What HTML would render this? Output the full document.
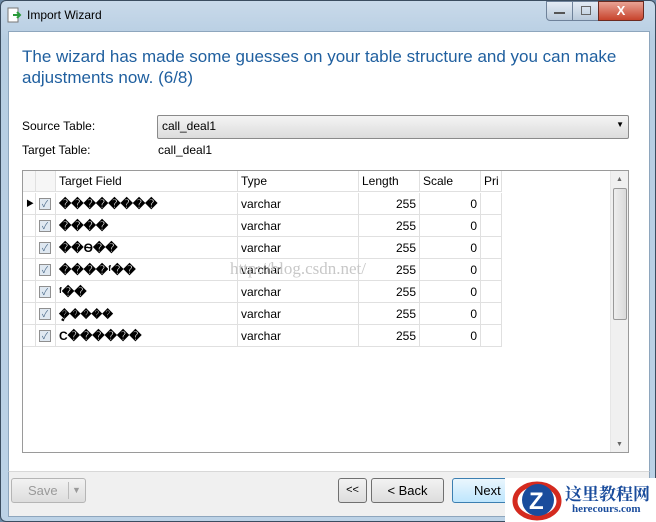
<!DOCTYPE html>
<html><head><style>
body{margin:0;width:656px;height:522px;overflow:hidden;background:#6d8aa6;font-family:"Liberation Sans","Noto Sans CJK SC",sans-serif;font-size:12px;}
.win{position:absolute;left:0;top:0;width:654px;height:520px;background:linear-gradient(#c9daea,#b6cde2 40px,#bcd2e6);border:1px solid #3b4d60;border-radius:6px;}
.title{position:absolute;left:26px;top:7px;font-size:12px;color:#000;}
.content{position:absolute;left:8px;top:31px;width:640px;height:439px;background:#fff;border:1px solid #8ea6bd;}
.foot{position:absolute;left:8px;top:471px;width:640px;height:44px;background:#f0f0f0;border:1px solid #8ea6bd;border-top:1px solid #d8d8d8;}
.h{position:absolute;left:22px;top:46px;font-size:17px;color:#1f5f9f;line-height:21px;width:620px;}
.lbl{position:absolute;font-size:12px;color:#000;}
.combo{position:absolute;left:157px;top:115px;width:470px;height:22px;border:1px solid #8a8a8a;border-radius:2px;background:linear-gradient(#f4f4f4,#dcdcdc);}
.grid{position:absolute;left:22px;top:170px;width:605px;height:281px;border:1px solid #9a9a9a;background:#fff;}
.c{position:absolute;height:21px;line-height:21px;border-right:1px solid #e0e0e0;border-bottom:1px solid #e0e0e0;box-sizing:border-box;padding:0 3px;}
.btn{position:absolute;top:478px;height:23px;border:1px solid #707070;border-radius:3px;background:linear-gradient(#f2f2f2,#dddddd);text-align:center;line-height:23px;font-size:13px;}
.cb{display:inline-block;width:10px;height:10px;border:1px solid #8f8f8f;background:#dfe8f1;margin-top:5px;font-size:9px;line-height:10px;text-align:center;color:#4a6a8a;}
</style></head><body>
<div class="win">
<svg style="position:absolute;left:6px;top:6px" width="16" height="16"><rect x="1" y="1" width="10" height="14" fill="#fff" stroke="#777"/><path d="M6 8h7M10 5l3 3-3 3" stroke="#2a9a3a" stroke-width="2" fill="none"/></svg>
<div class="title">Import Wizard</div>
<div style="position:absolute;left:545px;top:0;width:25px;height:18px;border:1px solid #6f829a;border-radius:0 0 0 4px;background:linear-gradient(#e4ecf5,#b9c9da)"><div style="margin:10px 7px;height:2px;background:#555"></div></div>
<div style="position:absolute;left:571px;top:0;width:25px;height:18px;border:1px solid #6f829a;background:linear-gradient(#e4ecf5,#b9c9da)"><div style="margin:4px 8px;width:8px;height:7px;border:1px solid #666"></div></div>
<div style="position:absolute;left:597px;top:0;width:44px;height:18px;border:1px solid #6b2a20;border-radius:0 0 4px 0;background:linear-gradient(#e9a395,#c7432c);color:#fff;font-weight:bold;text-align:center;line-height:17px;font-size:13px">X</div>
</div>
<div class="content"></div>
<div class="foot"></div>
<div class="h">The wizard has made some guesses on your table structure and you can make adjustments now. (6/8)</div>
<div class="lbl" style="left:22px;top:119px">Source Table:</div>
<div class="combo"><span style="position:absolute;left:4px;top:3px">call_deal1</span><span style="position:absolute;right:4px;top:4px;font-size:8px">▼</span></div>
<div class="lbl" style="left:22px;top:143px">Target Table:</div>
<div class="lbl" style="left:158px;top:143px">call_deal1</div>
<div class="grid">
<div class="c" style="left:0;top:0;width:13px;background:#f6f6f6"></div>
<div class="c" style="left:13px;top:0;width:20px;background:#f6f6f6"></div>
<div class="c" style="left:33px;top:0;width:182px">Target Field</div>
<div class="c" style="left:215px;top:0;width:121px">Type</div>
<div class="c" style="left:336px;top:0;width:61px">Length</div>
<div class="c" style="left:397px;top:0;width:61px">Scale</div>
<div class="c" style="left:458px;top:0;width:21px;overflow:hidden">Pri</div>
<div id="rows"></div>
<div style="position:absolute;right:0;top:0;width:17px;height:281px;background:#f0f0f0;border-left:1px solid #e6e6e6"><div style="text-align:center;font-size:7px;color:#666;margin-top:5px">▲</div><div style="position:absolute;left:2px;top:17px;width:12px;height:130px;border:1px solid #999;border-radius:2px;background:linear-gradient(90deg,#eee,#dadada)"></div><div style="position:absolute;bottom:4px;width:17px;text-align:center;font-size:7px;color:#666">▼</div></div>
</div>
<script>
var names=["��������","����","��Ѳ��","����ᶠ��","ᶠ��","�ܷ����","C������"];
var h="";
for(var i=0;i<7;i++){var t=22+i*22;
h+='<div class="c" style="left:0;top:'+t+'px;width:13px;height:22px;font-size:8px;line-height:22px">'+(i==0?'▶':'')+'</div>';
h+='<div class="c" style="left:13px;top:'+t+'px;width:20px;height:22px"><span class="cb">✓</span></div>';
h+='<div class="c" style="left:33px;top:'+t+'px;width:182px;height:22px;line-height:22px;font-weight:bold">'+names[i]+'</div>';
h+='<div class="c" style="left:215px;top:'+t+'px;width:121px;height:22px;line-height:22px">varchar</div>';
h+='<div class="c" style="left:336px;top:'+t+'px;width:61px;height:22px;line-height:22px;text-align:right">255</div>';
h+='<div class="c" style="left:397px;top:'+t+'px;width:61px;height:22px;line-height:22px;text-align:right">0</div>';
h+='<div class="c" style="left:458px;top:'+t+'px;width:21px;height:22px"></div>';}
document.getElementById("rows").innerHTML=h;
</script>
<div style="position:absolute;left:230px;top:259px;font-family:'Liberation Serif',serif;font-size:17px;color:#c8c8c8">http://blog.csdn.net/</div>
<div class="btn" style="left:11px;width:73px;color:#999;border-color:#b5b5b5;text-align:left"><span style="padding-left:16px">Save</span><span style="position:absolute;left:56px;top:3px;height:17px;border-left:1px solid #bbb"></span><span style="position:absolute;left:60px;font-size:9px">▼</span></div>
<div class="btn" style="left:338px;width:27px;font-size:11px">&lt;&lt;</div>
<div class="btn" style="left:371px;width:71px">&lt; Back</div>
<div class="btn" style="left:452px;width:80px;border-color:#3c7fb1;background:linear-gradient(#eaf6fd,#bee6fd)">Next &gt;</div>
<div style="position:absolute;left:505px;top:478px;width:151px;height:44px;background:#fff"></div>
<svg style="position:absolute;left:505px;top:476px" width="60" height="46"><ellipse cx="32" cy="25" rx="22" ry="17" fill="none" stroke="#d42a1f" stroke-width="5"/><circle cx="33" cy="24" r="16" fill="#1a4c9c"/><text x="24" y="33" font-size="24" font-weight="bold" fill="#fff" font-family="Liberation Sans">Z</text></svg>
<div style="position:absolute;left:565px;top:480px;font-family:'Noto Serif CJK SC',serif;font-weight:bold;font-size:17px;color:#1a4c9c">这里教程网</div>
<div style="position:absolute;left:572px;top:503px;font-family:'Liberation Serif',serif;font-weight:bold;font-size:11px;color:#1a4c9c">herecours.com</div>
</body></html>
